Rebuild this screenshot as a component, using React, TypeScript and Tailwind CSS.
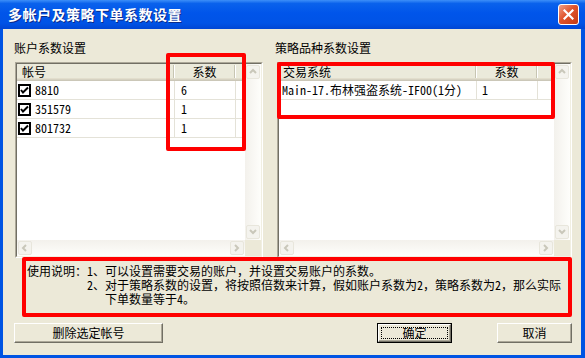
import React from "react";

const FONT = "font-['Noto_Sans_Mono_CJK_SC','Noto_Sans_CJK_SC','Liberation_Mono',monospace]";

function Chevron({ dir }: { dir: "up" | "down" | "left" | "right" }) {
  const pts = {
    up: "1,5 4,2 7,5",
    down: "1,2 4,5 7,2",
    left: "5,1 2,4 5,7",
    right: "2,1 5,4 2,7",
  }[dir];
  return (
    <svg width="8" height="8" viewBox="0 0 8 8">
      <polyline points={pts} fill="none" stroke="#c9c7ba" strokeWidth="2" />
    </svg>
  );
}

function ScrollBtn({ dir }: { dir: "up" | "down" | "left" | "right" }) {
  return (
    <div className="w-[16px] h-[16px] p-px shrink-0">
      <div className="w-full h-full rounded-[2px] border border-[#e8e6dc] bg-[#f4f3ee] flex items-center justify-center">
        <Chevron dir={dir} />
      </div>
    </div>
  );
}

function ListBox({
  width,
  cols,
  header,
  rows,
}: {
  width: string;
  cols: string[];
  header: React.ReactNode[];
  rows: React.ReactNode[][];
}) {
  return (
    <div className={`${width} h-[196px] border border-t-[#aca899] border-l-[#aca899] border-b-white border-r-white`}>
      <div className="h-full flex flex-col border border-t-[#716f64] border-l-[#716f64] border-b-[#f1efe2] border-r-[#f1efe2] bg-white">
        <div className="flex-1 flex min-h-0">
          <div className="flex-1 flex flex-col">
            <div className="flex h-[17px] bg-[#ebeadb] shadow-[inset_0_-1px_0_#cbc7b8,inset_0_-2px_0_#d6d2c2,inset_0_-3px_0_#e2decd]">
              {header.map((h, i) => (
                <div key={i} className={`${cols[i]} flex items-center h-full`}>
                  <div className="flex-1 leading-[14px] pb-[2px]">{h}</div>
                  <div className="w-[2px] h-[13px] mb-[2px] border-l border-l-[#c7c5b2] border-r border-r-white" />
                </div>
              ))}
            </div>
            {rows.map((r, ri) => (
              <div key={ri} className="flex">
                {r.map((c, ci) => (
                  <div key={ci} className={`${cols[ci]} border-b border-r border-[#e4e2d8] flex items-center`}>
                    {c}
                  </div>
                ))}
              </div>
            ))}
          </div>
          <div className="w-[16px] flex flex-col bg-[linear-gradient(to_right,#f3f1ec,#fefefb)]">
            <ScrollBtn dir="up" />
            <div className="flex-1" />
            <ScrollBtn dir="down" />
          </div>
        </div>
        <div className="h-[16px] flex">
          <div className="flex-1 flex bg-[linear-gradient(to_bottom,#f3f1ec,#fefefb)]">
            <ScrollBtn dir="left" />
            <div className="flex-1" />
            <ScrollBtn dir="right" />
          </div>
          <div className="w-[16px] bg-[#ece9d8]" />
        </div>
      </div>
    </div>
  );
}

function Check() {
  return (
    <div className="w-[13px] h-[13px] border-2 border-black bg-white flex items-center justify-center">
      <svg width="9" height="9" viewBox="0 0 9 9">
        <polyline points="1,4 3,6.5 8,1.5" fill="none" stroke="#000" strokeWidth="2" />
      </svg>
    </div>
  );
}

function Btn({ label, width, def }: { label: string; width: string; def?: boolean }) {
  return (
    <div className={`${width} h-[20px] ${def ? "border border-black" : ""}`}>
      <div className="h-full border border-t-white border-l-white border-b-[#716f64] border-r-[#716f64] bg-[#ece9d8] shadow-[inset_-1px_-1px_0_#aca899] flex items-center justify-center p-[2px]">
        <div className={`w-full h-full flex items-center justify-center ${def ? "border border-dotted border-black" : ""}`}>
          {label}
        </div>
      </div>
    </div>
  );
}

export default function App() {
  const accounts = ["8810", "351579", "801732"];
  const coef = ["6", "1", "1"];

  return (
    <div className={`${FONT} text-[12px] text-black w-[585px] h-[358px] relative flex flex-col bg-[#0054e3]`}>
      {/* 标题栏 */}
      <div className="h-[29px] shrink-0 flex items-center pl-[8px] pr-[6px] bg-[linear-gradient(to_bottom,#3d8ff8_0%,#0a62ec_12%,#0055ea_45%,#0053e6_80%,#0046d4_100%)]">
        <div className="flex-1 text-white font-bold text-[14px] tracking-[0.5px] [text-shadow:1px_1px_#0a2a8a] font-['Noto_Sans_CJK_SC',sans-serif]">
          多帐户及策略下单系数设置
        </div>
        <div className="w-[21px] h-[21px] rounded-[3px] border border-white bg-[linear-gradient(135deg,#f0a08a,#e0542c_45%,#c43a12)] flex items-center justify-center">
          <svg width="11" height="11" viewBox="0 0 11 11">
            <path d="M1.5 1.5 L9.5 9.5 M9.5 1.5 L1.5 9.5" stroke="#fff" strokeWidth="2.2" strokeLinecap="square" />
          </svg>
        </div>
      </div>

      {/* 主体 */}
      <div className="flex-1 ml-[3px] mr-[4px] mb-[3px] bg-[#ece9d8] flex flex-col">
        <div className="flex pt-[11px] pl-[12px]">
          <div className="w-[248px]">
            <div className="h-[16px] leading-[16px] -ml-px">账户系数设置</div>
            <div className="mt-[6px]">
              <ListBox
                width="w-[248px]"
                cols={["w-[158px]", "w-[61px]", "w-[9px]"]}
                header={[
                  <span className="pl-[5px]">帐号</span>,
                  <span className="block text-center">系数</span>,
                  null,
                ]}
                rows={accounts.map((a, i) => [
                  <div className="h-[17px] flex items-center pl-px gap-[4px]">
                    <Check />
                    <span>{a}</span>
                  </div>,
                  <span className="pl-[6px]">{coef[i]}</span>,
                  null,
                ])}
              />
            </div>
          </div>
          <div className="w-[295px] ml-[14px]">
            <div className="h-[16px] leading-[16px] -ml-[2px]">策略品种系数设置</div>
            <div className="mt-[6px]">
              <ListBox
                width="w-[295px]"
                cols={["w-[198px]", "w-[61px]", "w-[16px]"]}
                header={[
                  <span className="pl-[4px]">交易系统</span>,
                  <span className="block text-center">系数</span>,
                  null,
                ]}
                rows={[
                  [
                    <span className="h-[16px] leading-[16px] pl-[3px] whitespace-nowrap">Main-17.布林强盗系统-IF00(1分)</span>,
                    <span className="pl-[5px]">1</span>,
                    <span className="h-[16px]" />,
                  ],
                ]}
              />
            </div>
          </div>
        </div>

        {/* 使用说明 */}
        <div className="flex pl-[24px] mt-[6px] leading-[14px] whitespace-nowrap">
          <div>使用说明：</div>
          <div>
            <div>1、可以设置需要交易的账户，并设置交易账户的系数。</div>
            <div>2、对于策略系数的设置，将按照倍数来计算，假如账户系数为2，策略系数为2，那么实际</div>
            <div className="pl-[18px]">下单数量等于4。</div>
          </div>
        </div>

        {/* 按钮 */}
        <div className="flex items-center mt-[17px] pl-[11px]">
          <Btn label="删除选定帐号" width="w-[149px]" />
          <div className="flex-1" />
          <Btn label="确定" width="w-[75px]" def />
          <div className="w-[45px]" />
          <Btn label="取消" width="w-[75px]" />
          <div className="w-[9px]" />
        </div>
      </div>

      {/* 红色标注框 */}
      <div className="absolute left-[166px] top-[53px] w-[80px] h-[98px] border-[4px] border-[#ff0000] rounded-[2px]" />
      <div className="absolute left-[277px] top-[62px] w-[278px] h-[57px] border-[4px] border-[#ff0000] rounded-[2px]" />
      <div className="absolute left-[22px] top-[257px] w-[550px] h-[60px] border-[4px] border-[#ff0000] rounded-[2px]" />
    </div>
  );
}
